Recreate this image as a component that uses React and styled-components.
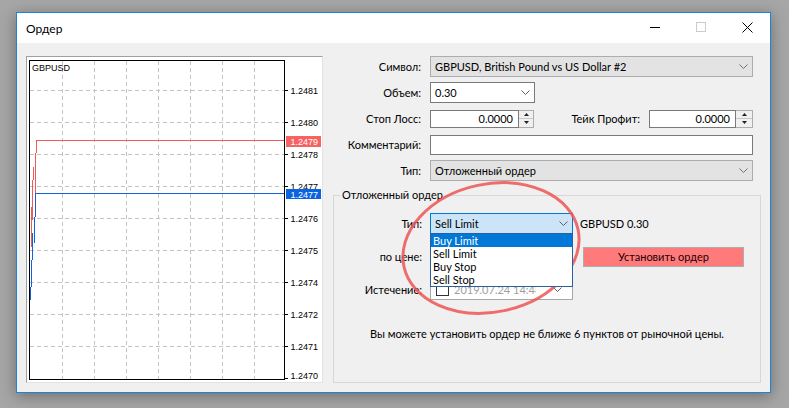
import React from "react";
import styled, { createGlobalStyle } from "styled-components";

const UI_FONT = `Lato, "Noto Sans", "Liberation Sans", sans-serif`;

const GlobalStyle = createGlobalStyle`
  html, body { margin: 0; padding: 0; }
  body { background: #a6a6a6; font-family: ${UI_FONT}; font-size: 11px; color: #000; }
  * { box-sizing: border-box; }
`;

/* ── Window frame ── */
const Desktop = styled.div`
  position: relative; width: 789px; height: 408px; overflow: hidden;
  padding: 12px 0 0 16px; background: #a6a6a6;
`;
const Window = styled.div`
  width: 755px; height: 381px; display: flex; flex-direction: column;
  border: 1px solid #1a84d8; background: #f0f0f0;
  box-shadow: 0 3px 14px rgba(0, 0, 0, 0.35);
`;
const TitleBar = styled.div`
  height: 30px; flex: none; display: flex; align-items: center; background: #fff;
`;
const Title = styled.span`flex: 1; padding-left: 9px; font-size: 12px;`;
const CtlBtn = styled.div`
  width: 46px; height: 30px; display: flex; align-items: center; justify-content: center;
  padding-bottom: 2px;
`;
const Body = styled.div`
  flex: 1; display: flex; gap: 10px; padding: 13px 9px 9px 9px;
`;

/* ── Chart ── */
const ChartPanel = styled.div`
  width: 297px; height: 327px; flex: none; background: #fff;
  border: 1px solid; border-color: #a0a0a0 #e3e3e3 #e3e3e3 #a0a0a0;
`;
const ChartSvg = styled.svg`
  display: block; font-family: "Liberation Sans", Arial, sans-serif; font-size: 9px;
`;

/* ── Form ── */
const FormCol = styled.div`flex: 1; display: flex; flex-direction: column;`;
const TopForm = styled.div`
  display: flex; flex-direction: column; gap: 5px; padding-right: 8px;
`;
const Row = styled.div`
  display: flex; align-items: center; height: ${({ $h }) => $h || 21}px;
`;
const Label = styled.div`
  flex: none; width: ${({ $w }) => $w || 88}px; margin-right: ${({ $gap }) => $gap ?? 9}px;
  text-align: right; white-space: nowrap;
`;
const Combo = styled.div`
  position: relative; flex: ${({ $w }) => ($w ? "none" : "1")};
  width: ${({ $w }) => ($w ? `${$w}px` : "auto")}; height: 21px;
  display: flex; align-items: center; justify-content: space-between;
  padding: 0 4px 0 ${({ $pl }) => $pl ?? 4}px;
  border: 1px solid ${({ $open, $edit }) => ($open ? "#0078d7" : $edit ? "#7a7a7a" : "#adadad")};
  background: ${({ $open, $edit }) => ($open ? "#cce4f7" : $edit ? "#fff" : "#e3e3e3")};
`;
const SpinField = styled.div`
  flex: none; width: ${({ $w }) => $w}px; height: 18px; display: flex;
`;
const SpinInput = styled.div`
  flex: 1; border: 1px solid #7a7a7a; background: #fff;
  display: flex; align-items: center; justify-content: flex-end; padding-right: 5px;
`;
const Spin = styled.div`
  width: ${({ $w }) => $w || 15}px; display: flex; flex-direction: column;
  border: 1px solid #adadad; border-left: none; background: #f0f0f0;
`;
const SpinHalf = styled.div`
  flex: 1; display: flex; align-items: center; justify-content: center;
  & + & { border-top: 1px solid #c8c8c8; }
`;
const Input = styled.div`
  flex: 1; height: 20px; border: 1px solid #7a7a7a; background: #fff;
`;
const Spacer = styled.div`flex: 1;`;

/* ── Group box ── */
const Group = styled.fieldset`
  margin: 7px 0 0 0; padding: 0; height: 195px; min-width: 0;
  border: 1px solid #d7d7d7;
`;
const Legend = styled.legend`
  margin-left: 6px; padding: 0 2px; font-size: 11px; line-height: 14px;
`;
const GroupRows = styled.div`
  display: flex; flex-direction: column; gap: 12px; padding-top: 11px;
`;
const ComboWrap = styled.div`position: relative; flex: none; width: 143px;`;
const ListPopup = styled.div`
  position: absolute; left: 0; top: 20px; width: 143px; z-index: 2;
  border: 1px solid #2b5f9e; background: #fff;
`;
const ListItem = styled.div`
  height: 13px; line-height: 13px; padding-left: 2px;
  background: ${({ $sel }) => ($sel ? "#0078d7" : "#fff")};
  color: ${({ $sel }) => ($sel ? "#fff" : "#000")};
`;
const Note = styled.span`margin-left: 7px;`;
const PriceInput = styled.div`
  flex: none; width: 143px; height: 20px; border: 1px solid #7a7a7a; background: #fff;
`;
const OrderBtn = styled.div`
  flex: none; width: 161px; height: 20px; margin-left: 10px;
  display: flex; align-items: center; justify-content: center;
  background: #ff7b7b; border: 1px solid #adadad; color: #1a0000;
`;
const DateField = styled.div`
  flex: none; width: 143px; height: 21px; display: flex; align-items: center;
  padding: 0 10px 0 5px; border: 1px solid #a8a8a8; background: #fff;
`;
const Check = styled.div`
  flex: none; width: 13px; height: 13px; border: 1px solid #333; background: #fff;
`;
const DateText = styled.span`
  width: 82px; margin-left: 5px; overflow: hidden; white-space: nowrap; color: #a0a0a0;
`;
const Message = styled.div`
  margin-top: 27px; text-align: center; line-height: 14px;
`;

/* ── Annotation ── */
const Overlay = styled.svg`
  position: absolute; left: 0; top: 0; pointer-events: none;
`;

const Chevron = ({ color = "#606060" }) => (
  <svg width="9" height="5" viewBox="0 0 9 5">
    <polyline points="0.5,0.5 4.5,4.5 8.5,0.5" fill="none" stroke={color} strokeWidth="1" />
  </svg>
);

const Arrow = ({ up }) => (
  <svg width="5" height="3" viewBox="0 0 5 3">
    <polygon points={up ? "0,3 2.5,0 5,3" : "0,0 2.5,3 5,0"} fill="#222" />
  </svg>
);

const Spinner = ({ w }) => (
  <Spin $w={w}>
    <SpinHalf><Arrow up /></SpinHalf>
    <SpinHalf><Arrow /></SpinHalf>
  </Spin>
);

const GRID_Y = [33, 65, 97, 129, 161, 193, 225, 257, 289];
const GRID_X = [35, 67, 99, 131, 163, 195, 227];
const PRICES = ["1.2481", "1.2480", "1.2478", "1.2477", "1.2476", "1.2475", "1.2474", "1.2472", "1.2471"];
const RED_STEPS = [[9, 83, 96], [8, 96, 136], [6, 110, 123], [5, 123, 163], [4, 150, 190]];
const BLUE_STEPS = [[8, 136, 160], [7, 160, 186], [5, 176, 203], [4, 203, 230], [3, 230, 243]];

function Chart() {
  return (
    <ChartSvg width="295" height="325" viewBox="0 0 295 325">
      {GRID_X.map((x) => (
        <line key={x} x1={x + 0.5} y1="4" x2={x + 0.5} y2="322" stroke="#c4c4c4" strokeDasharray="4 3" />
      ))}
      {GRID_Y.map((y) => (
        <line key={y} x1="3" y1={y + 0.5} x2="257" y2={y + 0.5} stroke="#c4c4c4" strokeDasharray="4 3" />
      ))}
      {GRID_Y.map((y, i) => (
        <g key={y}>
          <line x1="257" y1={y + 0.5} x2="261" y2={y + 0.5} stroke="#000" />
          <text x="263.5" y={y + 4}>{PRICES[i]}</text>
        </g>
      ))}
      <line x1="257" y1="321.5" x2="261" y2="321.5" stroke="#000" />
      <text x="263.5" y="322">1.2470</text>

      <rect x="2.5" y="3.5" width="255" height="319" fill="none" stroke="#000" />
      <text x="5" y="14">GBPUSD</text>

      <line x1="9" y1="83.5" x2="257" y2="83.5" stroke="#f25a5a" />
      {RED_STEPS.map(([x, a, b]) => (
        <line key={`r${x}${a}`} x1={x + 0.5} y1={a} x2={x + 0.5} y2={b} stroke="#f25a5a" />
      ))}
      <line x1="9" y1="136.5" x2="257" y2="136.5" stroke="#1262e0" />
      {BLUE_STEPS.map(([x, a, b]) => (
        <line key={`b${x}${a}`} x1={x + 0.5} y1={a} x2={x + 0.5} y2={b} stroke="#1262e0" />
      ))}

      <rect x="259" y="79" width="35" height="11" fill="#f76262" />
      <text x="263.5" y="87.5" fill="#fff">1.2479</text>
      <rect x="259" y="132" width="35" height="10" fill="#0b63e2" />
      <text x="263.5" y="140.5" fill="#fff">1.2477</text>
    </ChartSvg>
  );
}

export default function App() {
  return (
    <>
      <GlobalStyle />
      <Desktop>
        <Window>
          <TitleBar>
            <Title>Ордер</Title>
            <CtlBtn>
              <svg width="10" height="1"><rect width="10" height="1" fill="#000" /></svg>
            </CtlBtn>
            <CtlBtn>
              <svg width="10" height="10"><rect x="0.5" y="0.5" width="9" height="9" fill="none" stroke="#cccccc" /></svg>
            </CtlBtn>
            <CtlBtn>
              <svg width="11" height="11" viewBox="0 0 11 11">
                <path d="M0.5 0.5 L10.5 10.5 M10.5 0.5 L0.5 10.5" stroke="#000" strokeWidth="1" />
              </svg>
            </CtlBtn>
          </TitleBar>

          <Body>
            <ChartPanel><Chart /></ChartPanel>

            <FormCol>
              <TopForm>
                <Row>
                  <Label>Символ:</Label>
                  <Combo>GBPUSD, British Pound vs US Dollar #2<Chevron color="#707070" /></Combo>
                </Row>
                <Row>
                  <Label>Объем:</Label>
                  <Combo $edit $w={105}>0.30<Chevron /></Combo>
                </Row>
                <Row>
                  <Label>Стоп Лосс:</Label>
                  <SpinField $w={104}><SpinInput>0.0000</SpinInput><Spinner /></SpinField>
                  <Spacer />
                  <Label $w={100}>Тейк Профит:</Label>
                  <SpinField $w={104}><SpinInput>0.0000</SpinInput><Spinner w={17} /></SpinField>
                </Row>
                <Row>
                  <Label>Комментарий:</Label>
                  <Input />
                </Row>
                <Row>
                  <Label>Тип:</Label>
                  <Combo>Отложенный ордер<Chevron color="#707070" /></Combo>
                </Row>
              </TopForm>

              <Group>
                <Legend>Отложенный ордер</Legend>
                <GroupRows>
                  <Row>
                    <Label $gap={8}>Тип:</Label>
                    <ComboWrap>
                      <Combo $open>Sell Limit<Chevron /></Combo>
                      <ListPopup>
                        <ListItem $sel>Buy Limit</ListItem>
                        <ListItem>Sell Limit</ListItem>
                        <ListItem>Buy Stop</ListItem>
                        <ListItem>Sell Stop</ListItem>
                      </ListPopup>
                    </ComboWrap>
                    <Note>GBPUSD 0.30</Note>
                  </Row>
                  <Row>
                    <Label $gap={8}>по цене:</Label>
                    <PriceInput />
                    <OrderBtn>Установить ордер</OrderBtn>
                  </Row>
                  <Row>
                    <Label $gap={8}>Истечение:</Label>
                    <DateField>
                      <Check />
                      <DateText>2019.07.24 14:48</DateText>
                      <Spacer />
                      <Chevron />
                    </DateField>
                  </Row>
                </GroupRows>
                <Message>Вы можете установить ордер не ближе 6 пунктов от рыночной цены.</Message>
              </Group>
            </FormCol>
          </Body>
        </Window>

        <Overlay width="789" height="408">
          <ellipse
            cx="491" cy="248" rx="89" ry="64"
            transform="rotate(-12 491 248)"
            fill="none" stroke="#ef5555" strokeOpacity="0.85" strokeWidth="3"
          />
        </Overlay>
      </Desktop>
    </>
  );
}
